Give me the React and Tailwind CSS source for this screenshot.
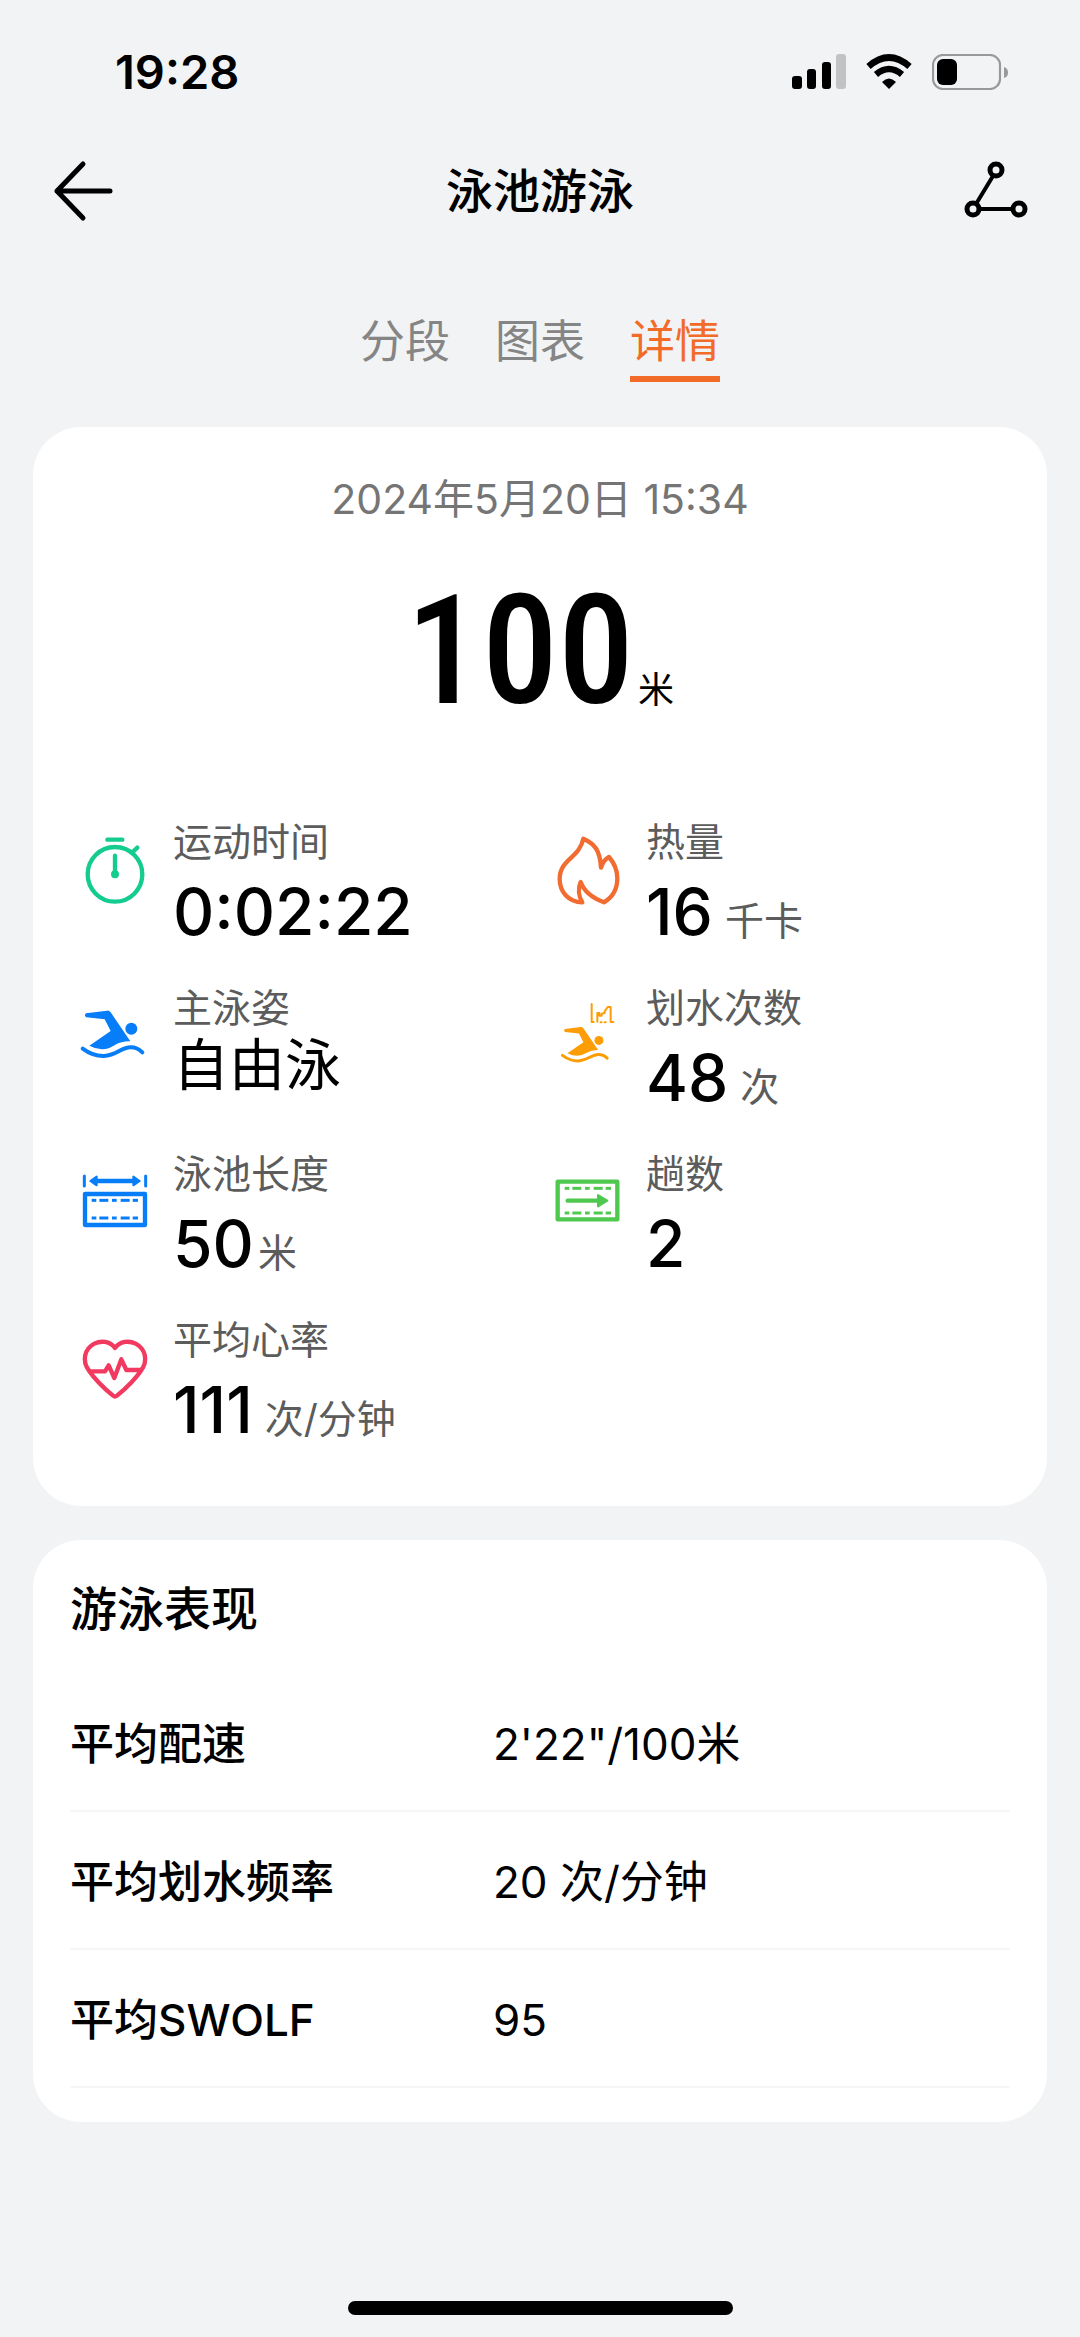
import { useState } from 'react';

const TABS = ['分段', '图表', '详情'];

const DASHES = [
  [38, 52],
  [61, 88],
  [99, 113],
  [125, 152],
  [161, 177],
];

const Icon = ({ className, children }) => (
  <svg
    viewBox="0 0 216 216"
    className={`h-[72px] w-[72px] shrink-0 ${className}`}
    fill="none"
    stroke="currentColor"
    strokeWidth="13"
    strokeLinecap="round"
    strokeLinejoin="round"
    aria-hidden="true"
  >
    {children}
  </svg>
);

const LaneMarks = ({ y }) => (
  <g strokeWidth="9" strokeLinecap="butt">
    {DASHES.map(([from, to]) => (
      <path key={from} d={`M${from} ${y}H${to}`} />
    ))}
  </g>
);

const Swimmer = () => (
  <>
    <path
      d="M21 37L84 29Q91 28 95 34L154 121Q128 120 108 132Q72 156 31 134L95 90L77 55L22 49Q14 43 21 37Z"
      fill="currentColor"
      stroke="none"
    />
    <circle cx="157" cy="83" r="18" fill="currentColor" stroke="none" />
    <path d="M11 143Q42 166 75 165C115 163 125 139 155 139Q175 139 190 154" strokeWidth="12" />
  </>
);

const TimerIcon = () => (
  <Icon className="text-[#14cc8f]">
    <circle cx="108" cy="118" r="82" />
    <path d="M85 14H130M161 51L175 38M108 62V118" />
    <circle cx="108" cy="118" r="12" fill="currentColor" stroke="none" />
  </Icon>
);

const FlameIcon = () => (
  <Icon className="text-[#f26c31]">
    <path d="M94 11C128 26 144 46 147 98C151 84 158 73 171 66C190 88 196 106 196 130C196 162 180 188 156 202C124 190 97 172 86 141C77 160 80 184 91 202C48 200 23 170 23 132C23 72 82 70 94 11Z" />
  </Icon>
);

const StrokeStyleIcon = () => (
  <Icon className="text-[#087df8]">
    <Swimmer />
  </Icon>
);

const StrokeCountIcon = () => (
  <Icon className="text-[#fc9d05]">
    <g transform="translate(23 56) scale(.75)">
      <Swimmer />
    </g>
    <path d="M119 9V63H125M136 62V36H142V44H149V38L158 36V31L167 18H176V63H184M146 64H149M158 64H161" strokeWidth="6" />
  </Icon>
);

const PoolLengthIcon = () => (
  <Icon className="text-[#087df8]">
    <path d="M16 27V57M200 27V57" strokeWidth="9" />
    <path d="M50 42H166" />
    <path d="M34 42L53 29V55ZM182 42L163 29V55Z" fill="currentColor" strokeWidth="6" />
    <rect x="18" y="81" width="180" height="93" />
    <LaneMarks y="100" />
    <LaneMarks y="153" />
  </Icon>
);

const LapsIcon = () => (
  <Icon className="text-[#4fc850]">
    <rect x="17" y="44" width="179" height="113" />
    <LaneMarks y="64" />
    <LaneMarks y="138" />
    <path d="M47 101H140" />
    <path d="M138 84L166 101L138 118Z" fill="currentColor" strokeWidth="6" />
  </Icon>
);

const HeartRateIcon = () => (
  <Icon className="text-[#f23a60]">
    <path d="M108 45C92 24 66 22 46 32C16 48 8 84 30 113C50 142 78 168 102 188Q108 193 114 188C138 168 166 142 186 113C208 84 200 48 170 32C150 22 124 24 108 45Z" />
    <path d="M34 115H78L89 97L106 135L127 79L142 111H184" />
  </Icon>
);

const METRICS = [
  { icon: TimerIcon, label: '运动时间', value: '0:02:22' },
  { icon: FlameIcon, label: '热量', value: '16', unit: '千卡', spaced: true },
  { icon: StrokeStyleIcon, label: '主泳姿', text: '自由泳' },
  { icon: StrokeCountIcon, label: '划水次数', value: '48', unit: '次', spaced: true },
  { icon: PoolLengthIcon, label: '泳池长度', value: '50', unit: '米' },
  { icon: LapsIcon, label: '趟数', value: '2' },
  { icon: HeartRateIcon, label: '平均心率', value: '111', unit: '次/分钟', spaced: true },
];

const PERFORMANCE = [
  { label: '平均配速', value: '2\'22"/100米' },
  { label: '平均划水频率', value: '20 次/分钟' },
  { label: '平均SWOLF', value: '95' },
];

const StatusBar = () => (
  <div className="flex h-[143px] items-center justify-between pr-[72px] pl-[115px]">
    <span className="text-[47px] leading-none font-semibold">19:28</span>
    <div className="flex items-center gap-5">
      <svg viewBox="0 0 54 36" className="h-9 w-[54px]" aria-hidden="true">
        <rect x="0" y="22" width="10" height="13" rx="3" />
        <rect x="15" y="15" width="9" height="20" rx="3" />
        <rect x="30" y="8" width="9" height="27" rx="3" />
        <rect x="44" y="0" width="10" height="35" rx="3" fill="#c1c2c4" />
      </svg>
      <svg viewBox="0 0 46 36" className="h-9 w-[46px]" aria-hidden="true">
        <path d="M2.500 12.500Q23 -5.500 43.500 12.500" fill="none" stroke="#000" strokeWidth="6.500" />
        <path d="M10 20.500Q23 9.500 36 20.500" fill="none" stroke="#000" strokeWidth="6.500" />
        <path d="M16 28Q23 21 30 28L23 35Z" />
      </svg>
      <svg viewBox="0 0 76 36" className="h-9 w-[76px]" aria-hidden="true">
        <rect x="1" y="1" width="67" height="34" rx="10" fill="none" stroke="#98999b" strokeWidth="2.200" />
        <rect x="5" y="5" width="20" height="26" rx="6" />
        <path d="M72 13Q76 14 76 18.500T72 24Z" fill="#98999b" />
      </svg>
    </div>
  </div>
);

const Header = () => (
  <header className="flex h-24 items-center justify-between px-[52px]">
    <button type="button" aria-label="返回">
      <svg viewBox="0 0 64 64" className="h-16 w-16" fill="none" stroke="#000" strokeWidth="5" strokeLinecap="round" strokeLinejoin="round">
        <path d="M31 5L5 32L31 59M5 32H58" />
      </svg>
    </button>
    <h1 className="text-[47px] leading-[64px] font-medium">泳池游泳</h1>
    <button type="button" aria-label="轨迹">
      <svg viewBox="0 0 64 64" className="h-16 w-16" fill="none" stroke="#000" strokeWidth="4">
        <g strokeWidth="5">
          <circle cx="32" cy="11" r="6" />
          <circle cx="9" cy="50" r="6" />
          <circle cx="55" cy="50" r="6" />
        </g>
        <path d="M29 17L12 45M15 50H49" />
      </svg>
    </button>
  </header>
);

const Metric = ({ icon: MetricIcon, label, value, text, unit, spaced }) => (
  <div className="flex gap-[22px]">
    <div className="pt-5">
      <MetricIcon />
    </div>
    <div className="h-[138px]">
      <dt className="text-[39px] leading-[54px] text-[#5c5c5c]">{label}</dt>
      {text ? (
        <dd className="text-[56px] leading-[60px]">{text}</dd>
      ) : (
        <dd className="text-[64px] leading-[86px] font-medium whitespace-nowrap">
          {value}
          {unit && (
            <span className={`text-[39px] leading-none font-normal text-[#5c5c5c] ${spaced ? 'ml-3' : 'ml-1'}`}>{unit}</span>
          )}
        </dd>
      )}
    </div>
  </div>
);

const App = () => {
  const [activeTab, setActiveTab] = useState('详情');

  return (
    <div className="flex min-h-screen flex-col bg-[#f1f3f4] font-['Inter','Noto_Sans_CJK_SC',sans-serif] text-black">
      <StatusBar />
      <Header />

      <nav className="mt-[71px] flex justify-center gap-[45px]">
        {TABS.map((tab) => (
          <button
            key={tab}
            type="button"
            onClick={() => setActiveTab(tab)}
            className={`border-b-6 pb-[2px] text-[45px] leading-[64px] ${
              tab === activeTab ? 'border-[#f26b28] text-[#f26b28]' : 'border-transparent text-[#858585]'
            }`}
          >
            {tab}
          </button>
        ))}
      </nav>

      <main className="mt-[45px] flex flex-col gap-[34px] px-[33px]">
        <section className="rounded-[48px] bg-white px-[46px] pt-[46px] pb-[55px]">
          <p className="text-center text-[41px] leading-[52px] text-[#757575]">2024年5月20日 15:34</p>
          <p className="mt-[50px] flex items-baseline justify-center gap-1">
            <span className="font-['Roboto_Condensed','Roboto',sans-serif] text-[152px] leading-[152px] font-medium">100</span>
            <span className="text-[36px]">米</span>
          </p>
          <dl className="mt-[88px] grid grid-cols-[473px_1fr] gap-y-7">
            {METRICS.map((metric) => (
              <Metric key={metric.label} {...metric} />
            ))}
          </dl>
        </section>

        <section className="rounded-[48px] bg-white px-[37px] pt-[37px] pb-[34px]">
          <h2 className="text-[47px] leading-[64px] font-medium">游泳表现</h2>
          <table className="mt-8 w-full text-left text-[44px]">
            <tbody>
              {PERFORMANCE.map((row) => (
                <tr key={row.label} className="h-[138px] border-b-2 border-[#f6f6f6]">
                  <th scope="row" className="w-[45%] pt-1 font-medium">
                    {row.label}
                  </th>
                  <td className="pt-1">{row.value}</td>
                </tr>
              ))}
            </tbody>
          </table>
        </section>
      </main>

      <div className="mt-auto flex justify-center pb-[22px]">
        <div className="h-[14px] w-[385px] rounded-full bg-black" />
      </div>
    </div>
  );
};

export default App;
